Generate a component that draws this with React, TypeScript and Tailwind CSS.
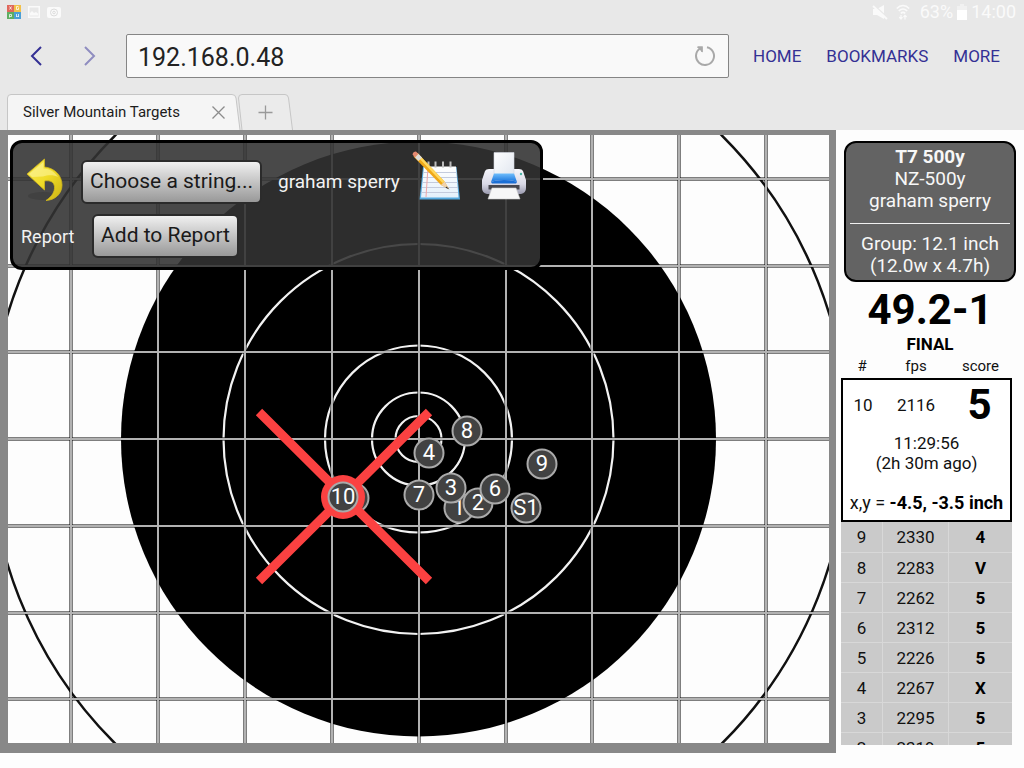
import { useState } from "react";

interface Shot {
  readonly id: string;
  readonly x: number;
  readonly y: number;
}

interface ScoreRow {
  readonly num: number;
  readonly fps: number;
  readonly score: string;
}

// Drawn in order, later shots cover earlier ones
const SHOTS: Shot[] = [
  { id: "1", x: 451, y: 373 },
  { id: "2", x: 470, y: 368 },
  { id: "3", x: 443, y: 353 },
  { id: "4", x: 421, y: 318 },
  { id: "6", x: 487, y: 354 },
  { id: "7", x: 411, y: 360 },
  { id: "8", x: 459, y: 296 },
  { id: "9", x: 534, y: 329 },
  { id: "S1", x: 518, y: 373 },
];

const ROWS: ScoreRow[] = [
  { num: 9, fps: 2330, score: "4" },
  { num: 8, fps: 2283, score: "V" },
  { num: 7, fps: 2262, score: "5" },
  { num: 6, fps: 2312, score: "5" },
  { num: 5, fps: 2226, score: "5" },
  { num: 4, fps: 2267, score: "X" },
  { num: 3, fps: 2295, score: "5" },
  { num: 2, fps: 2319, score: "5" },
];

const GRID_X = [63, 150, 237, 324, 411, 498, 584, 671, 758];
const GRID_Y = [44, 131, 217, 304, 391, 478, 564];

function StatusBar() {
  return (
    <div className="flex h-6 shrink-0 items-center justify-between pl-[7px] pr-2 text-[#fafafa]">
      <div className="flex items-center gap-[7px]">
        <svg width="14" height="14" viewBox="0 0 14 14" aria-hidden="true">
          <path fill="#e0675c" d="M0 0h7v7H0z" />
          <path fill="#f2c14a" d="M7 0h7v7H7z" />
          <path fill="#5fae62" d="M0 7h7v7H0z" />
          <path fill="#4b9fd6" d="M7 7h7v7H7z" />
          <path stroke="#fff" strokeOpacity=".75" fill="none" d="M2.500 1.500l2 3M4.500 1.500l-2 3M11.500 1.500h-2v3h2v-2M2.500 12.500v-3h2v2h-2M9.500 9v3l1-1 1 1v-3" />
        </svg>
        <svg width="12" height="12" viewBox="0 0 12 12" aria-hidden="true">
          <path fill="none" stroke="#fafafa" strokeWidth="1.500" d="M.75.75h10.500v10.500H.75z" />
          <path fill="#fafafa" d="M2 9.500V7l2-2 2 2 2-1 2 1.500v2z" />
        </svg>
        <svg width="14" height="11" viewBox="0 0 14 11" aria-hidden="true">
          <rect width="14" height="11" rx="2" fill="#fafafa" />
          <circle cx="7" cy="5.500" r="3.500" fill="none" stroke="#dcdcdc" />
          <circle cx="7" cy="5.500" r="1.300" fill="none" stroke="#dcdcdc" />
        </svg>
      </div>
      <div className="flex items-center text-[18px] leading-6">
        <svg width="16" height="16" viewBox="0 0 16 16" className="mr-2" aria-hidden="true">
          <path fill="#fafafa" d="M1 5h4l7-4v14l-7-4H1z" />
          <path stroke="#e8e8e8" strokeWidth="2" d="M1 .5l14 13" />
          <path stroke="#fafafa" strokeWidth="1.800" d="M1 2l14 13" />
        </svg>
        <svg width="14" height="16" viewBox="0 0 14 16" className="mr-2.5" fill="none" stroke="#fafafa" strokeWidth="1.600" aria-hidden="true">
          <path d="M.8 4.500C4.500.5 9.500.5 13.200 4.500M2.800 7C5.500 4.300 8.500 4.300 11.200 7M4.800 9.300C6.300 8 7.700 8 9.200 9.300" />
          <path d="M5 11v4M3.300 13l1.700 2 1.500-2M9 15.500v-4M7.500 13L9 11.300l1.700 1.700" strokeWidth="1.200" />
        </svg>
        <span>63%</span>
        <svg width="10" height="16" viewBox="0 0 10 16" className="mx-1" aria-hidden="true">
          <path fill="#f1f1f1" d="M3 0h4v2h3v4H0V2h3z" />
          <path fill="#fff" d="M0 6h10v10H0z" />
        </svg>
        <span>14:00</span>
      </div>
    </div>
  );
}

function Toolbar() {
  const [url, setUrl] = useState("192.168.0.48");

  return (
    <div className="flex h-16 shrink-0 items-center pr-6 text-[#343094]">
      <button type="button" aria-label="Back" className="ml-7 flex h-8 w-4 items-center justify-center">
        <svg width="14" height="20" viewBox="0 0 14 20" fill="none" stroke="#343094" strokeWidth="2">
          <path d="M12 1L3 10l9 9" />
        </svg>
      </button>
      <button type="button" aria-label="Forward" className="ml-[38px] flex h-8 w-4 items-center justify-center">
        <svg width="14" height="20" viewBox="0 0 14 20" fill="none" stroke="#8f8dc0" strokeWidth="2">
          <path d="M2 1l9 9-9 9" />
        </svg>
      </button>
      <div className="ml-7 flex h-11 min-w-0 flex-1 items-center rounded-xs border border-[#858585] bg-[#f9f9f9] pr-3">
        <input
          type="text"
          aria-label="Address"
          value={url}
          onChange={(e) => setUrl(e.target.value)}
          className="h-full min-w-0 flex-1 bg-transparent pt-0.5 pl-[11px] text-[25px] text-[#222] outline-none"
        />
        <button type="button" aria-label="Reload">
          <svg width="22" height="22" viewBox="0 0 22 22" fill="none" stroke="#a9a9a9" strokeWidth="2">
            <path d="M13 2.200A9 9 0 1 1 6 3.500" />
            <path d="M3 2h5.500v5.500z" fill="#a9a9a9" stroke="none" />
            <path d="M3.500 2H8v5" strokeWidth="1.500" />
          </svg>
        </button>
      </div>
      <nav className="ml-6 flex gap-[25px] pt-0.5 text-[17px]">
        <a href="#home">HOME</a>
        <a href="#bookmarks">BOOKMARKS</a>
        <a href="#more">MORE</a>
      </nav>
    </div>
  );
}

function TabStrip() {
  return (
    <div className="mt-1.5 flex h-9 shrink-0 items-stretch pl-[7px]">
      <div className="relative flex w-[234px] items-center justify-between pr-4 pl-4">
        <svg className="absolute inset-0" width="234" height="36" viewBox="0 0 234 36" aria-hidden="true">
          <path d="M.5 36V4q0-3.500 3.500-3.500h221q3.500 0 4 3.500L233 36" fill="#f5f5f5" stroke="#c6c6c6" />
        </svg>
        <span className="relative text-[15px] text-[#1c1c1c]">Silver Mountain Targets</span>
        <button type="button" aria-label="Close tab" className="relative">
          <svg width="13" height="13" viewBox="0 0 13 13" stroke="#8c8c8c" strokeWidth="1.300">
            <path d="M.5.5l12 12M12.500.5l-12 12" />
          </svg>
        </button>
      </div>
      <button type="button" aria-label="New tab" className="relative -ml-[3px] flex w-[55px] items-center justify-center">
        <svg className="absolute inset-0" width="55" height="36" viewBox="0 0 55 36" aria-hidden="true">
          <path d="M4 36L.5 4Q.5.500 4 .5h43q3 0 3.500 3.500L54.500 36" fill="#ebebeb" stroke="#c6c6c6" />
        </svg>
        <svg className="relative" width="15" height="15" viewBox="0 0 15 15" stroke="#999" strokeWidth="1.300">
          <path d="M7.500.5v14M.5 7.500h14" />
        </svg>
      </button>
    </div>
  );
}

function Target() {
  return (
    <svg
      className="h-full w-full bg-[#fdfdfd]"
      viewBox="0 0 821 608"
      preserveAspectRatio="xMidYMid slice"
      role="img"
      aria-label="Target"
    >
      <circle cx="410.500" cy="304.500" r="429.500" fill="none" stroke="#111" strokeWidth="2.500" />
      <circle cx="410.500" cy="304" r="297.500" fill="#000" />
      <g fill="none" stroke="#f2f2f2" strokeWidth="2.200">
        <circle cx="410.500" cy="304" r="195" />
        <circle cx="410.500" cy="304" r="93.500" />
        <circle cx="410.500" cy="304" r="46.500" />
        <circle cx="410.500" cy="304" r="23" />
      </g>
      <g stroke="#000" strokeOpacity=".5" strokeWidth="4">
        {GRID_X.map((x) => (
          <path key={x} d={`M${x} 0V608`} />
        ))}
        {GRID_Y.map((y) => (
          <path key={y} d={`M0 ${y}H821`} />
        ))}
      </g>
      <g stroke="#b2b2b2" strokeWidth="2">
        {GRID_X.map((x) => (
          <path key={x} d={`M${x} 0V608`} />
        ))}
        {GRID_Y.map((y) => (
          <path key={y} d={`M0 ${y}H821`} />
        ))}
      </g>
      {/* Shot 5 sits under the latest one, only its edge shows */}
      <circle cx="346" cy="363" r="14.500" fill="#424242" stroke="#aaa" strokeWidth="2" />
      {SHOTS.map((shot) => (
        <ShotMarker key={shot.id} {...shot} />
      ))}
      {/* Latest shot */}
      <path d="M251 277L421 446M421 277L251 446" stroke="#fb4141" strokeWidth="9" />
      <circle cx="335" cy="362" r="22" fill="#fb4141" />
      <ShotMarker id="10" x={335} y={362} />
    </svg>
  );
}

function ShotMarker({ id, x, y }: Shot) {
  return (
    <g>
      <circle cx={x} cy={y} r="14.500" fill="#424242" stroke="#aaa" strokeWidth="2" />
      <text x={x} y={y + 7} textAnchor="middle" fontSize="22" fill="#fff">
        {id}
      </text>
    </g>
  );
}

function UndoIcon() {
  return (
    <svg width="38" height="44" viewBox="0 0 38 44">
      <defs>
        <linearGradient id="undo" x1="0" y1="0" x2="1" y2="1">
          <stop offset="0" stopColor="#f7e85a" />
          <stop offset=".5" stopColor="#f0dc28" />
          <stop offset="1" stopColor="#cdb414" />
        </linearGradient>
      </defs>
      <ellipse cx="17" cy="38" rx="15" ry="4" fill="#222" opacity=".2" />
      <path
        d="M1 16L18.500 1v8C29 10 36 18 36 27c0 9-7 15-16 15.500 6-4 9-9 8.500-14C28 24 24 22 18.500 23v9z"
        fill="url(#undo)"
        stroke="#d3b91b"
        strokeWidth=".8"
      />
      <path d="M3 16L17.500 4v6.500C24 11 29 14 32 19c-4-2-9-2.500-15-.5L6 19z" fill="#fff9b0" opacity=".5" />
    </svg>
  );
}

function NotepadIcon() {
  return (
    <svg width="48" height="50" viewBox="0 0 48 50">
      <defs>
        <linearGradient id="page" x1="0" y1="0" x2="0" y2="1">
          <stop offset="0" stopColor="#fff" />
          <stop offset="1" stopColor="#e3f0fb" />
        </linearGradient>
      </defs>
      <path d="M11 16h33.500L48 48.500H7.500z" fill="#55a9de" />
      <path d="M12 15.500h32l2.500 31H9z" fill="url(#page)" />
      <path d="M11.500 21.500h33M11 26.500h34M10.500 31.500h35M10 36.500h36M9.500 41.500h36.500" stroke="#c3cbdd" />
      <path d="M16 16l-2 30" stroke="#efa6a6" />
      <path d="M16.500 10.500v6M23.500 10.500v6M31 10.500v6M38.500 10.500v6" stroke="#bdbdbd" strokeWidth="2" />
      <path d="M1.500 5.500L5.500 2l27 28.500L37 38l-8-4z" fill="#f0a818" />
      <path d="M3.500 3.500L5.500 2l27 28.500-2 1.500z" fill="#ffd85e" />
      <path d="M29 34l3.500-3.500L37 38z" fill="#efd3ae" />
      <path d="M34.500 35.500L37.500 38.500l-4-1.800z" fill="#333" />
      <path d="M.5 3.500Q1 .5 4 .5l2.500 2.500-3.500 3.500z" fill="#e58a72" />
      <path d="M3 6.500L6.500 3 10 6.500 6.500 10z" fill="#dcdcdc" />
    </svg>
  );
}

function PrinterIcon() {
  return (
    <svg width="46" height="48" viewBox="0 0 46 48">
      <defs>
        <linearGradient id="body" x1="0" y1="0" x2="0" y2="1">
          <stop offset="0" stopColor="#f6f6fb" />
          <stop offset=".6" stopColor="#d9d9e6" />
          <stop offset="1" stopColor="#9a9aae" />
        </linearGradient>
        <linearGradient id="glass" x1="0" y1="0" x2="0" y2="1">
          <stop offset="0" stopColor="#6fbdfb" />
          <stop offset="1" stopColor="#1873dc" />
        </linearGradient>
        <linearGradient id="sheet" x1="0" y1="0" x2="1" y2="1">
          <stop offset="0" stopColor="#fff" />
          <stop offset="1" stopColor="#dfe5ee" />
        </linearGradient>
      </defs>
      <path d="M4 19q1-2 4-2h30q3 0 4 2l3 9v8q0 5-5 6H6q-5-1-5-6v-8z" fill="url(#body)" />
      <path d="M13 .5h20V22l1 3H12l1-3z" fill="url(#sheet)" stroke="#d3d7e0" strokeWidth=".6" />
      <path d="M13 21.500h20l3 8.500q-4-2-13-2t-13 2z" fill="url(#glass)" />
      <path d="M10 30q4-2 13-2t13 2l-1 1.500H11z" fill="#1b6fd6" />
      <path d="M7.500 33h31v4.500h-31z" fill="#46464e" />
      <path d="M11 36h24l4 11H7z" fill="#f7f7f7" stroke="#ccc" strokeWidth=".6" />
      <circle cx="40" cy="22" r="1.200" fill="#4ab5a5" />
    </svg>
  );
}

function ControlPanel() {
  const buttonClass =
    "h-11 rounded-md border-2 border-[#2b2b2b] bg-linear-to-b from-[#f0f0f0] to-[#999] px-[7px] text-[21px] text-[#1a1a1a] whitespace-nowrap";

  return (
    <div className="absolute left-0.5 top-[5px] flex h-[130px] w-[533px] flex-col rounded-xl border-3 border-black bg-[#323232]/89 pl-2 text-[#f2f2f2]">
      <div className="mt-3 flex h-[54px] items-center">
        <button type="button" aria-label="Undo" className="-mt-1 ml-[5px]">
          <UndoIcon />
        </button>
        <button type="button" className={`${buttonClass} ml-[17px] w-[181px]`}>
          Choose a string...
        </button>
        <span className="ml-4 w-[122px] whitespace-nowrap text-[19px]">graham sperry</span>
        <button type="button" aria-label="Notes" className="-mt-3 ml-3">
          <NotepadIcon />
        </button>
        <button type="button" aria-label="Print" className="-mt-3 ml-[21px]">
          <PrinterIcon />
        </button>
      </div>
      <div className="flex h-[54px] items-center">
        <span className="w-[71px] text-[18px]">Report</span>
        <button type="button" className={`${buttonClass} w-[147px]`}>
          Add to Report
        </button>
      </div>
    </div>
  );
}

function Sidebar() {
  return (
    <aside className="flex w-[188px] shrink-0 flex-col overflow-hidden bg-[#fdfdfd] pb-2 text-[#111]">
      <div className="mx-2 mt-[11px] rounded-xl border-2 border-black bg-[#636363] px-1 pt-[3px] pb-[3px] text-center text-[19px] leading-[22px] text-[#f7f7f7]">
        <p className="font-bold">T7 500y</p>
        <p>NZ-500y</p>
        <p>graham sperry</p>
        <hr className="mt-[11px] mb-[9px] border-[#f0f0f0]" />
        <p>Group: 12.1 inch</p>
        <p>(12.0w x 4.7h)</p>
      </div>
      <p className="mt-1 text-center text-[42px] leading-[48px] font-bold text-black">49.2-1</p>
      <p className="text-center text-[17px] leading-5 font-bold text-black">FINAL</p>
      <div className="mr-3 ml-[5px] min-h-0 flex-1 overflow-hidden">
        <table className="w-full table-fixed border-separate border-spacing-0 text-center">
          <colgroup>
            <col className="w-[42px]" />
            <col className="w-[66px]" />
            <col />
          </colgroup>
          <thead>
            <tr className="h-6 text-[15px] leading-[22px]">
              <th className="font-normal">#</th>
              <th className="font-normal">fps</th>
              <th className="font-normal">score</th>
            </tr>
          </thead>
          <tbody className="bg-white text-[17px] leading-5">
            <tr className="h-[52px]">
              <td className="border-t-2 border-l-2 border-black">10</td>
              <td className="border-t-2 border-black">2116</td>
              <td className="border-t-2 border-r-2 border-black text-[42px] leading-[50px] font-bold text-black">5</td>
            </tr>
            <tr className="h-[92px]">
              <td colSpan={3} className="border-x-2 border-b-2 border-black pb-1">
                <p>11:29:56</p>
                <p>(2h 30m ago)</p>
                <p className="mt-5 whitespace-nowrap text-[18px]">
                  x,y = <b className="text-black">-4.5, -3.5 inch</b>
                </p>
              </td>
            </tr>
          </tbody>
          <tbody className="bg-[#cacaca] text-[17px] leading-5">
            {ROWS.map((row) => (
              <tr key={row.num} className="h-[30px] first:h-[31px]">
                <td className="border-r border-b border-[#d8d8d8]">{row.num}</td>
                <td className="border-r border-b border-[#d8d8d8]">{row.fps}</td>
                <td className="border-b border-[#d8d8d8] font-bold text-black">{row.score}</td>
              </tr>
            ))}
          </tbody>
        </table>
      </div>
    </aside>
  );
}

export default function App() {
  return (
    <div className="flex h-screen flex-col overflow-hidden bg-[#e8e8e8] font-[Roboto,sans-serif]">
      <StatusBar />
      <Toolbar />
      <TabStrip />
      <main className="flex min-h-0 flex-1 bg-[#fdfdfd] pb-[15px]">
        <section className="min-w-0 flex-1 border-t-5 border-r-7 border-b-10 border-l-8 border-[#888]">
          <div className="relative h-full">
            <Target />
            <ControlPanel />
          </div>
        </section>
        <Sidebar />
      </main>
    </div>
  );
}
